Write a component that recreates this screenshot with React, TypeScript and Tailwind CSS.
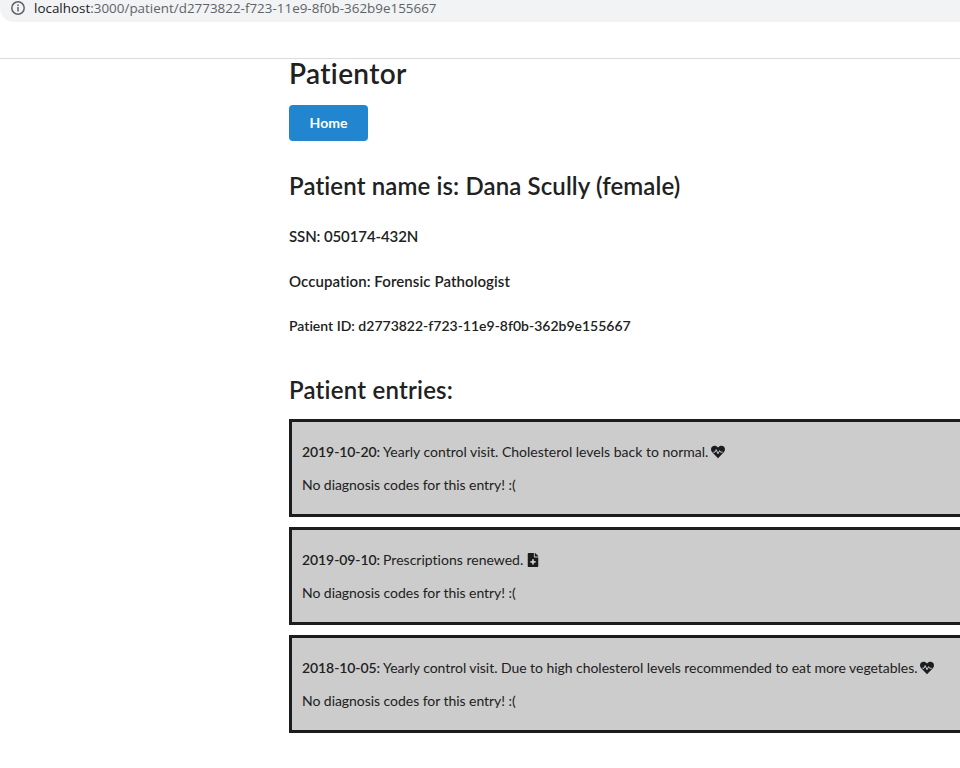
import { FaFileMedical } from "react-icons/fa";
import type { ReactNode } from "react";

function HeartPulse() {
  return (
    <svg width="14" height="14" viewBox="0 0 14 14">
      <path d="M7 13.2 1.2 7.3C-.4 5.6-.3 2.9 1.3 1.6 2.9.2 5.1.6 6.4 2L7 2.6l.6-.6C8.9.6 11.100.2 12.700 1.600c1.600 1.300 1.700 4 .1 5.700Z" fill="#1b1c1d" />
      <path d="M2.300 7.200H4L5.200 4.600 7 8.800 8.600 5.600 9.500 7.200H11.700" fill="none" stroke="#cccccc" strokeWidth="1" />
    </svg>
  );
}

function Entry({ date, children, icon }: { date: string; children: ReactNode; icon: ReactNode }) {
  return (
    <div className="mb-[10px] h-[98px] border-[3px] border-r-0 border-[#1b1c1d] bg-[#cccccc] pl-[10px] pt-5 text-[14px] leading-5 tracking-[-0.05px] whitespace-nowrap">
      <p className="flex items-center">
        <b className="mr-[3px] font-semibold tracking-[-0.08px]">{date}:</b>
        {children}
        <span className="ml-[3px] text-[#1b1c1d]">{icon}</span>
      </p>
      <p className="mt-[13px]">No diagnosis codes for this entry! :(</p>
    </div>
  );
}

export default function App() {
  return (
    <div className="h-[768px] w-[960px] overflow-hidden bg-white font-['Lato',sans-serif] text-[#212121] [font-variant-ligatures:none]">
      <header className="h-[59px] border-b border-[#dadce0]">
        <div className="flex h-[22px] items-start rounded-bl-[14px] bg-[#f1f3f4] pl-[11px] font-['Open_Sans',sans-serif] text-[13.4px] tracking-[0.015px] text-[#5f6368]">
          <svg className="mt-[1px]" width="14" height="14" viewBox="0 0 14 14" fill="none" stroke="#5f6368" strokeWidth="1.5">
            <circle cx="7" cy="7" r="6.2" />
            <path d="M7 6v4.500M7 3.500v1.400" />
          </svg>
          <span className="ml-[9px] leading-[17px]"><span className="text-[#202124]">localhost</span>:3000/patient/d2773822-f723-11e9-8f0b-362b9e155667</span>
        </div>
      </header>
      <main className="pl-[289px]">
        <h1 className="h-[46px] text-[28px] leading-[29px] font-semibold tracking-[0.36px]">Patientor</h1>
        <button className="block h-9 w-[79px] rounded-[4px] bg-[#2185d0] pb-[2px] text-[14px] font-bold text-white">Home</button>
        <h2 className="mt-[29px] text-[24px] leading-[31px] font-semibold tracking-[0.12px]">Patient name is: Dana Scully (female)</h2>
        <h4 className="mt-[26px] text-[15px] leading-[18px] font-semibold tracking-[-0.1px]">SSN: 050174-432N</h4>
        <h4 className="mt-[27px] text-[15px] leading-[18px] font-semibold tracking-[0.09px]">Occupation: Forensic Pathologist</h4>
        <h5 className="mt-[27px] text-[14px] leading-[18px] font-semibold">Patient ID: d2773822-f723-11e9-8f0b-362b9e155667</h5>
        <h2 className="mt-[39px] mb-[14px] text-[24px] leading-[31px] font-semibold tracking-[0.22px]">Patient entries:</h2>
        <Entry date="2019-10-20" icon={<HeartPulse />}>
          <span className="tracking-normal">Yearly control visit. Cholesterol levels back to normal.</span>
        </Entry>
        <Entry date="2019-09-10" icon={<FaFileMedical size={14} />}>
          <span className="tracking-[0.01px]">Prescriptions renewed.</span>
        </Entry>
        <Entry date="2018-10-05" icon={<HeartPulse />}>
          <span className="tracking-[-0.045px]">Yearly control visit. Due to high cholesterol levels recommended to eat more vegetables.</span>
        </Entry>
      </main>
    </div>
  );
}
